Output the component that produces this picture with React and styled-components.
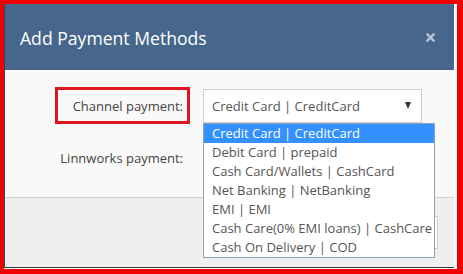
import React from "react";
import styled, { createGlobalStyle } from "styled-components";
import { FaTimes } from "react-icons/fa";

const GlobalStyle = createGlobalStyle`
  body {
    margin: 0;
    font-family: "Open Sans", "Liberation Sans", sans-serif;
  }
`;

const Frame = styled.div`
  width: 463px;
  height: 274px;
  box-sizing: border-box;
  border-style: solid;
  border-color: #f00000;
  border-width: 4px 6px 5px 4px;
  padding: 0 3px 1px 0;
  background: #fff;
  display: flex;
`;

const Modal = styled.div`
  flex: 1;
  display: flex;
  flex-direction: column;
  border-left: 1px solid #3a4656;
  border-bottom: 1px solid #3b3b3b;
`;

const Header = styled.div`
  height: 66px;
  flex-shrink: 0;
  background: #46678b;
  display: flex;
  align-items: center;
  justify-content: space-between;
  padding: 1px 17px 0 15px;
  box-sizing: border-box;
`;

const Title = styled.h4`
  margin: 0;
  color: #fff;
  font-size: 17.6px;
  font-weight: 400;
`;

const Close = styled.button`
  background: none;
  border: none;
  padding: 0;
  color: #b7c3d0;
  font-size: 13px;
  display: flex;
  cursor: pointer;
`;

const Body = styled.div`
  background: #f9f9f9;
  padding: 17px 0 21px;
  display: flex;
  flex-direction: column;
  gap: 15px;
`;

const Row = styled.div`
  display: flex;
  align-items: center;
  gap: 13px;
  height: 37px;
`;

const LabelCol = styled.div`
  width: 185px;
  display: flex;
  justify-content: flex-end;
`;

const Label = styled.label`
  height: 37px;
  box-sizing: border-box;
  display: flex;
  align-items: center;
  padding: 0 4px 0 15px;
  border: 3px solid ${(p) => (p.marked ? "#e0161f" : "transparent")};
  font-size: 13px;
  color: #444;
`;

const SelectWrap = styled.div`
  position: relative;
`;

const SelectBox = styled.div`
  width: 219px;
  height: 34px;
  box-sizing: border-box;
  border: 1px solid #cfcfcf;
  background: #fff;
  display: flex;
  align-items: center;
  justify-content: space-between;
  padding: 0 8px 0 8px;
  font-size: 13px;
  color: #555;
`;

const Arrow = styled.span`
  width: 0;
  height: 0;
  margin-left: auto;
  border-left: 3.5px solid transparent;
  border-right: 3.5px solid transparent;
  border-top: 7px solid #333;
  margin-right: 2px;
`;

const List = styled.ul`
  position: absolute;
  top: 34px;
  left: 0;
  z-index: 5;
  width: 232px;
  box-sizing: border-box;
  margin: 0;
  padding: 0;
  list-style: none;
  background: #fff;
  border: 1px solid #8ea2bd;
`;

const Option = styled.li`
  height: 19px;
  line-height: 19px;
  padding-left: 8px;
  font-size: 13px;
  white-space: nowrap;
  color: ${(p) => (p.active ? "#fff" : "#555")};
  background: ${(p) => (p.active ? "#3390ff" : "transparent")};
`;

const Footer = styled.div`
  flex: 1;
  background: #efefef;
  border-top: 1px solid #d2d2d2;
  display: flex;
  align-items: center;
  justify-content: flex-end;
  padding-right: 16px;
`;

const Button = styled.button`
  height: 33px;
  padding: 0 14px;
  font-family: inherit;
  font-size: 13px;
  color: #444;
  background: #fff;
  border: 1px solid #cfcfcf;
`;

const options = [
  "Credit Card | CreditCard",
  "Debit Card | prepaid",
  "Cash Card/Wallets | CashCard",
  "Net Banking | NetBanking",
  "EMI | EMI",
  "Cash Care(0% EMI loans) | CashCare",
  "Cash On Delivery | COD",
];

export default function App() {
  return (
    <>
      <GlobalStyle />
      <Frame>
        <Modal>
          <Header>
            <Title>Add Payment Methods</Title>
            <Close>
              <FaTimes />
            </Close>
          </Header>
          <Body>
            <Row>
              <LabelCol>
                <Label marked>Channel payment:</Label>
              </LabelCol>
              <SelectWrap>
                <SelectBox>
                  Credit Card | CreditCard
                  <Arrow />
                </SelectBox>
                <List>
                  {options.map((o, i) => (
                    <Option key={o} active={i === 0}>
                      {o}
                    </Option>
                  ))}
                </List>
              </SelectWrap>
            </Row>
            <Row>
              <LabelCol>
                <Label>Linnworks payment:</Label>
              </LabelCol>
              <SelectWrap>
                <SelectBox>
                  <Arrow />
                </SelectBox>
              </SelectWrap>
            </Row>
          </Body>
          <Footer>
            <Button>Save</Button>
          </Footer>
        </Modal>
      </Frame>
    </>
  );
}
